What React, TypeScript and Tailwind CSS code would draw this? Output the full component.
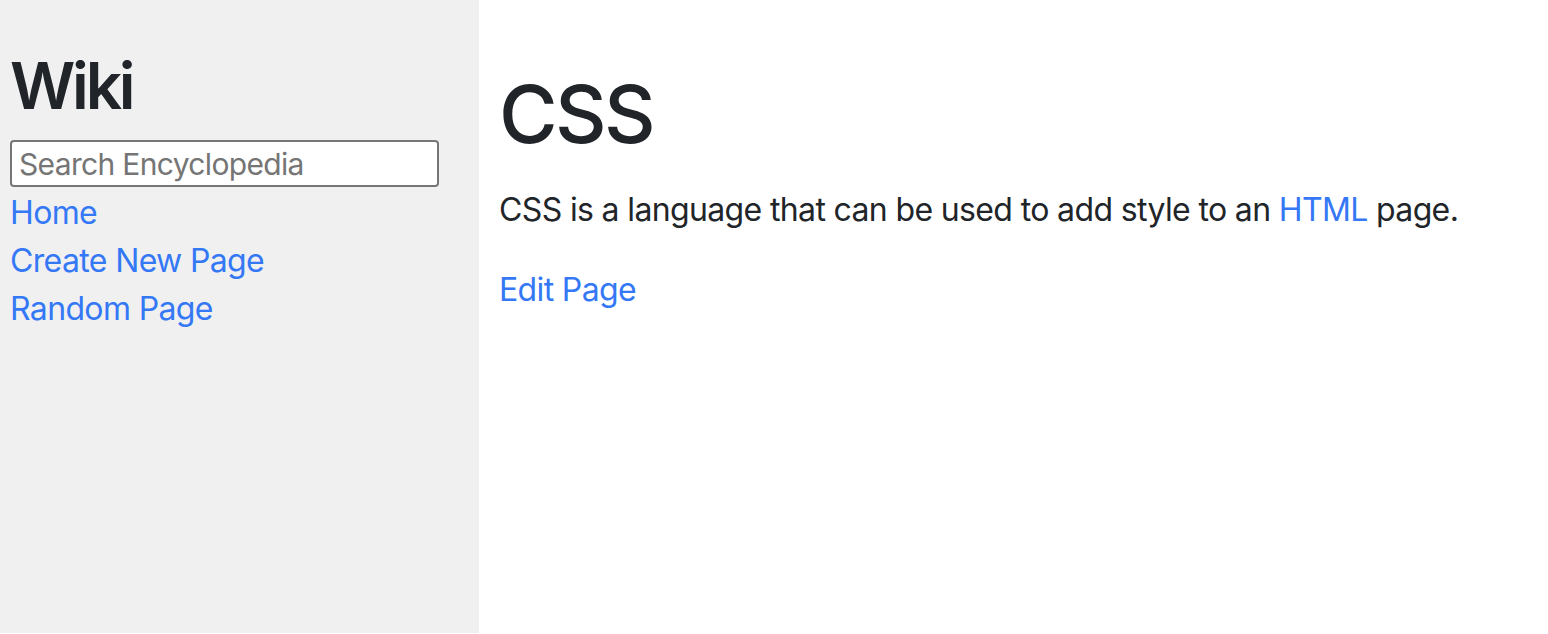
export default function App() {
  const link = 'text-[#3478f6] hover:underline';
  return (
    <div className="flex min-h-screen bg-white font-['Inter','Noto_Sans',sans-serif] text-[#212529] tracking-[-0.04em]">
      <aside className="w-[479px] shrink-0 bg-[#f0f0f0] h-[633px] px-[10px] pt-[47px]">
        <h2 className="text-[64px] leading-[77px] font-semibold mb-[16px] tracking-[-0.05em]">Wiki</h2>
        <form>
          <input
            type="text"
            placeholder="Search Encyclopedia"
            className="w-[429px] h-[47px] bg-white border-2 border-[#767676] rounded-[4px] px-[7px] text-[30px] leading-[30px] tracking-[-0.022em] placeholder:text-[#757575] outline-none"
          />
        </form>
        <div className="text-[32px] leading-[48px] pt-[2px]">
          <div>
            <a href="#" className={link}>Home</a>
          </div>
          <div>
            <a href="#" className={link}>Create New Page</a>
          </div>
          <div>
            <a href="#" className={link}>Random Page</a>
          </div>
        </div>
      </aside>
      <main className="flex-1 px-[20px] pt-[66px]">
        <h1 className="text-[80px] leading-[96px] font-medium mb-[24px] tracking-[-0.033em]">CSS</h1>
        <p className="text-[32px] leading-[48px] mb-[32px]">
          CSS is a language that can be used to add style to an <a href="#" className={link}>HTML</a> page.
        </p>
        <a href="#" className={`${link} text-[32px] leading-[48px]`}>Edit Page</a>
      </main>
    </div>
  );
}
